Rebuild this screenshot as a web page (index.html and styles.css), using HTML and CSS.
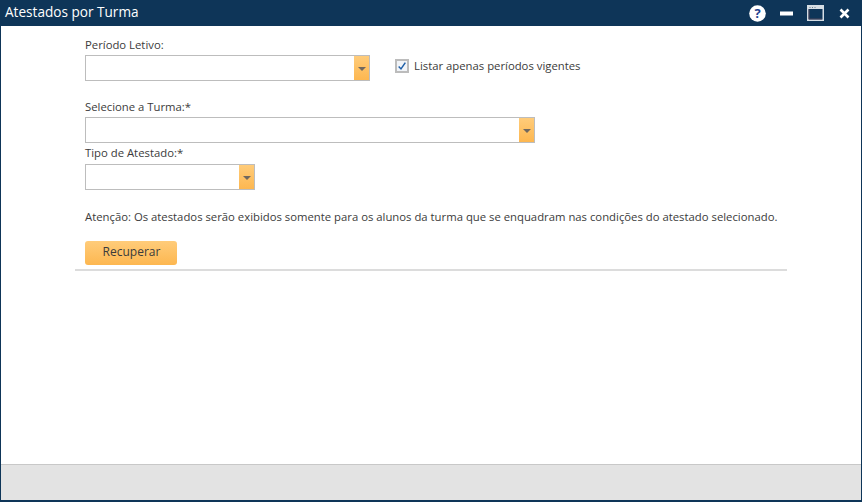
FILE: index.html
```html
<!DOCTYPE html>
<html lang="pt">
<head>
<meta charset="utf-8">
<title>Atestados por Turma</title>
<link rel="stylesheet" href="styles.css">
</head>
<body>
<div class="window">
  <header class="titlebar">
    <h1 class="title">Atestados por Turma</h1>
    <div class="controls">
      <svg class="icon" width="17" height="17" viewBox="0 0 17 17"><circle cx="8.5" cy="8.5" r="8.300" fill="#fff"/><text x="8.5" y="13" text-anchor="middle" class="help">?</text></svg>
      <svg class="icon" width="13" height="5" viewBox="0 0 13 5"><rect width="13" height="4" y="0.5" fill="#fff"/></svg>
      <svg class="icon" width="17" height="16" viewBox="0 0 17 16"><rect x="0.75" y="0.75" width="15.500" height="14.500" fill="#0e3558" stroke="#d5dde4" stroke-width="1.500"/><rect x="1" y="1" width="15" height="3" fill="#d5dde4"/><path d="M2.500 2.500h1M5 2.500h1M7.500 2.500h1" stroke="#6f7f8e"/><path d="M2 4.500v9.500h13" fill="none" stroke="#5a4a5c" stroke-width="0.800"/></svg>
      <svg class="icon close" width="11" height="11" viewBox="0 0 11 11"><path d="M1.500 1.500l8 8M9.500 1.500l-8 8" stroke="#fff" stroke-width="2.600" fill="none"/></svg>
    </div>
  </header>
  <main class="content">
    <form class="form">
      <div class="field">
        <label class="label">Período Letivo:</label>
        <div class="row">
          <div class="combo combo-a"><span class="combo-btn"><i class="caret"></i></span></div>
          <label class="check"><span class="box"><svg width="12" height="12" viewBox="0 0 12 12"><path d="M2 6.500l2.800 3L10 2" fill="none" stroke="#1f5fa8" stroke-width="1.800"/></svg></span>Listar apenas períodos vigentes</label>
        </div>
      </div>
      <div class="field field-b">
        <label class="label">Selecione a Turma:*</label>
        <div class="combo combo-b"><span class="combo-btn"><i class="caret"></i></span></div>
      </div>
      <div class="field field-c">
        <label class="label label-tall">Tipo de Atestado:*</label>
        <div class="combo combo-c"><span class="combo-btn"><i class="caret"></i></span></div>
      </div>
      <p class="note">Atenção: Os atestados serão exibidos somente para os alunos da turma que se enquadram nas condições do atestado selecionado.</p>
      <button type="button" class="btn">Recuperar</button>
    </form>
    <hr class="rule">
  </main>
  <footer class="footer"></footer>
</div>
</body>
</html>
```
FILE: styles.css
```css
* { box-sizing: border-box; }
html, body { margin: 0; height: 100%; }
body { font-family: "Open Sans", "Noto Sans", sans-serif; font-size: 11.32px; color: #3b3b3b; background: #fff; }
.window { width: 862px; height: 502px; display: flex; flex-direction: column; border: 1px solid #0e3558; border-width: 0 1px 2px; }
.titlebar { height: 26px; flex: none; margin: 0 -1px; background: #0e3558; color: #fff; display: flex; align-items: center; justify-content: space-between; padding: 0 12px 0 5px; }
.title { margin: 0 0 3px; font-size: 13.600px; font-weight: 400; }
.controls { display: flex; align-items: center; gap: 14px; }
.icon { display: block; }
.close { margin-left: 1px; }
.help { font: 700 13px "Open Sans", sans-serif; fill: #1c3f8f; }
.content { flex: 1; padding: 12px 74px 0; display: flex; flex-direction: column; }
.form { padding-left: 10px; display: flex; flex-direction: column; }
.field { display: flex; flex-direction: column; }
.label { height: 17px; line-height: 14px; }
.label-tall { height: 18px; }
.row { display: flex; align-items: center; gap: 25px; }
.combo { height: 26px; border: 1px solid #bdbdbd; background: #fff; display: flex; justify-content: flex-end; }
.combo-a { width: 285px; }
.combo-b { width: 450px; }
.combo-c { width: 170px; }
.combo-btn { width: 15px; background: linear-gradient(#ffcc7a, #fdb750); display: flex; align-items: center; justify-content: center; }
.caret { width: 0; height: 0; border: 4px solid transparent; border-top: 4px solid #70685f; border-bottom: 0; margin-top: 2px; }
.check { display: flex; align-items: center; gap: 5px; margin-top: -5px; }
.box { width: 14px; height: 14px; border: 2px solid #bcbcbc; background: #f1f4f8; display: flex; align-items: center; justify-content: center; }
.field-b { margin-top: 19px; }
.field-c { margin-top: 3px; }
.note { margin: 19px 0 0; line-height: 16px; white-space: nowrap; }
.btn { margin-top: 16px; width: 92px; height: 24px; padding: 0 0 3px 1px; border: 0; border-radius: 3px; background: linear-gradient(#ffcc7a, #fdb750); font: inherit; font-size: 12px; color: #3b3b3b; }
.rule { margin: 4px 0 0; height: 2px; border: 0; background: #dcdcdc; }
.footer { height: 36px; flex: none; background: #e3e3e3; border-top: 1px solid #c8c8c8; }
```
